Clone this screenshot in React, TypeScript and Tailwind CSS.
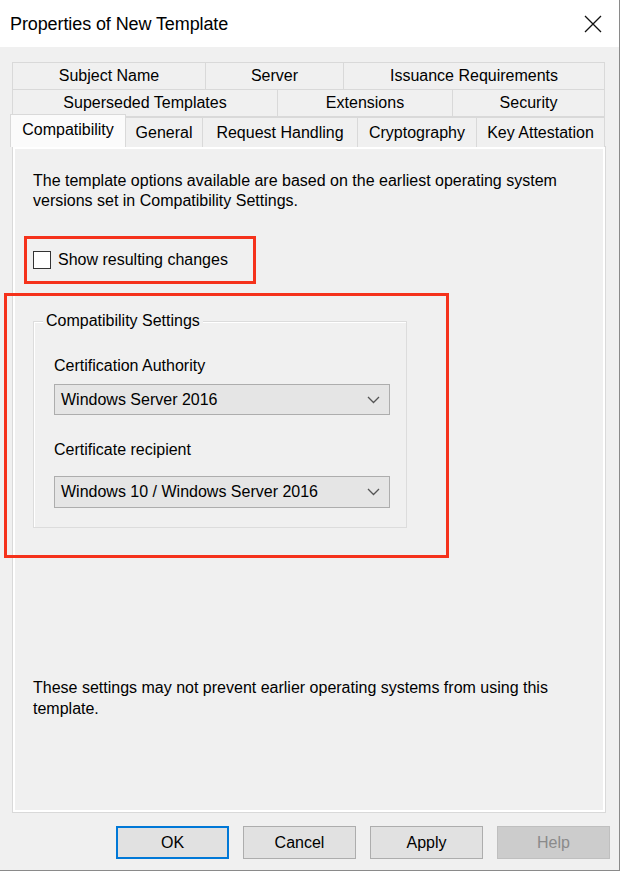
export default function App() {
  const cell =
    "h-full flex items-center justify-center border border-[#d9d9d9] -ml-px first:ml-0 bg-[#f0f0f0] text-[16px] leading-none whitespace-nowrap";
  return (
    <div className="w-[623px] h-[873px] bg-white font-['Liberation_Sans',Arial,sans-serif] text-black overflow-hidden">
      <div className="w-[620px] h-[871px] border-r border-b border-[#8a8a8a] flex flex-col bg-[#f0f0f0]">
        {/* Title bar */}
        <div className="h-[47px] bg-white flex items-center justify-between pl-[10px] pr-[16px] shrink-0">
          <span className="text-[18px] leading-none tracking-[-0.1px]">Properties of New Template</span>
          <svg width="18" height="18" viewBox="0 0 18 18" className="mr-[1px]">
            <path d="M1 1 L17 17 M17 1 L1 17" stroke="#111" strokeWidth="1.3" fill="none" />
          </svg>
        </div>

        {/* Tabs */}
        <div className="pt-[15px] pl-[12px] flex flex-col">
          <div className="flex h-[28px] w-[593px]">
            <div className={cell + " w-[194px]"}>Subject Name</div>
            <div className={cell + " w-[139px]"}>Server</div>
            <div className={cell + " w-[262px]"}>Issuance Requirements</div>
          </div>
          <div className="flex h-[28px] w-[593px] -mt-px">
            <div className={cell + " w-[266px]"}>Superseded Templates</div>
            <div className={cell + " w-[176px]"}>Extensions</div>
            <div className={cell + " w-[153px]"}>Security</div>
          </div>
          <div className="flex items-end h-[33px] -ml-[2px] -mt-[3px] relative z-10 -mb-[1px]">
            <div className="h-[33px] w-[116px] flex items-center justify-center border border-b-0 border-[#d9d9d9] bg-[#fbfbfb] text-[16px] leading-none pb-[3px]">
              Compatibility
            </div>
            <div className="flex h-[30px] items-stretch -ml-px">
              <div className={cell + " border-b-0 w-[78px] ml-0 pt-[1px]"}>General</div>
              <div className={cell + " border-b-0 w-[156px] pt-[1px]"}>Request Handling</div>
              <div className={cell + " border-b-0 w-[120px] pt-[1px]"}>Cryptography</div>
              <div className={cell + " border-b-0 w-[129px] pt-[1px]"}>Key Attestation</div>
            </div>
          </div>

          {/* Panel */}
          <div className="w-[594px] h-[667px] border border-[#d9d9d9] bg-[#f0f0f0] shadow-[inset_2px_2px_0_#fff,inset_-2px_-2px_0_#fff] flex flex-col pl-[20px] pt-[24px]">
            <p className="text-[16px] leading-[20px] w-[560px]">
              The template options available are based on the earliest operating system versions set in Compatibility Settings.
            </p>

            <div className="mt-[25px] -ml-[9px] w-[232px] h-[48px] border-[3px] border-[#f5321b] flex items-center pl-[6px]">
              <div className="w-[18px] h-[18px] border border-[#333] bg-white shrink-0" />
              <span className="ml-[7px] text-[16px] leading-none">Show resulting changes</span>
            </div>

            <div className="mt-[9px] -ml-[29px] w-[445px] h-[265px] border-[3px] border-[#f5321b] pl-[26px] pt-[25px]">
              <div className="relative w-[374px] h-[207px] border border-[#dcdcdc] shadow-[inset_1px_1px_0_#fff] pl-[20px] pt-[34px]">
                <span className="absolute left-[9px] -top-[11px] bg-[#f0f0f0] px-[3px] text-[16px] leading-[20px]">
                  Compatibility Settings
                </span>
                <div className="text-[16px] leading-[20px]">Certification Authority</div>
                <div className="mt-[8px] w-[336px] h-[31px] bg-[#e5e5e5] border border-[#adadad] flex items-center justify-between pl-[6px] pr-[9px] text-[16px]">
                  <span>Windows Server 2016</span>
                  <svg width="13" height="8" viewBox="0 0 13 8">
                    <path d="M1 1 L6.5 6.5 L12 1" stroke="#555" strokeWidth="1.3" fill="none" />
                  </svg>
                </div>
                <div className="mt-[25px] text-[16px] leading-[20px]">Certificate recipient</div>
                <div className="mt-[16px] w-[336px] h-[32px] bg-[#e5e5e5] border border-[#adadad] flex items-center justify-between pl-[6px] pr-[9px] text-[16px]">
                  <span>Windows 10 / Windows Server 2016</span>
                  <svg width="13" height="8" viewBox="0 0 13 8">
                    <path d="M1 1 L6.5 6.5 L12 1" stroke="#555" strokeWidth="1.3" fill="none" />
                  </svg>
                </div>
              </div>
            </div>

            <p className="mt-[119px] text-[16px] leading-[21px] w-[560px]">
              These settings may not prevent earlier operating systems from using this template.
            </p>
          </div>
        </div>

        {/* Buttons */}
        <div className="flex gap-[14px] pl-[116px] mt-[13px]">
          <button className="w-[113px] h-[33px] bg-[#e1e1e1] border-2 border-[#0078d7] text-[16px]">OK</button>
          <button className="w-[113px] h-[33px] bg-[#e1e1e1] border border-[#adadad] text-[16px]">Cancel</button>
          <button className="w-[113px] h-[33px] bg-[#e1e1e1] border border-[#adadad] text-[16px]">Apply</button>
          <button className="w-[113px] h-[33px] bg-[#cccccc] border border-[#bfbfbf] text-[16px] text-[#8a8a8a]">Help</button>
        </div>
      </div>
    </div>
  );
}
